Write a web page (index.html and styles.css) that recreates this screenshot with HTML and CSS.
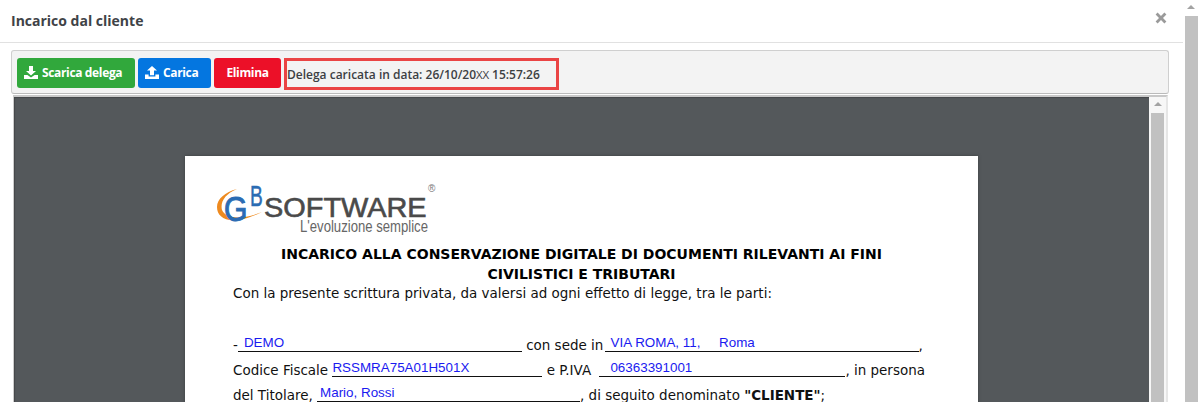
FILE: index.html
```html
<!DOCTYPE html>
<html lang="it">
<head>
<meta charset="utf-8">
<title>Incarico dal cliente</title>
<link rel="stylesheet" href="styles.css">
</head>
<body>
<div class="app">
  <div class="modal">
    <header class="modal-head">
      <h1 class="modal-title">Incarico dal cliente</h1>
      <svg class="close" viewBox="0 0 12 12" width="12" height="12"><path d="M2.6 0.6 6 4 9.4 0.6 11.4 2.6 8 6 11.4 9.4 9.4 11.4 6 8 2.6 11.4 0.6 9.4 4 6 0.6 2.6Z"/></svg>
    </header>
    <div class="modal-body">
      <div class="toolbar">
        <button class="btn btn-green"><svg class="ico" viewBox="0 0 14 13"><path d="M5 0h4v5h3L7 9.6 2 5h3zM0 9h3.4L7 11.6 10.6 9H14v4H0z"/></svg>Scarica delega</button>
        <button class="btn btn-blue"><svg class="ico" viewBox="0 0 14 13"><path d="M7 0l5 4.6H9v4.6H5V4.6H2zM0 8.4h3.6v2.2h6.8V8.4H14V13H0z"/></svg>Carica</button>
        <button class="btn btn-red">Elimina</button>
        <div class="status">Delega caricata in data: 26/10/20<span class="xx">XX</span> 15:57:26</div>
      </div>
      <div class="viewer">
        <div class="pdf-area">
          <div class="page">
            <div class="logo">
              <svg class="logo-swoosh" viewBox="0 0 48 40" width="48" height="40">
                <path d="M20 3C8 6 0 13 0 21 0 33 14 41 45 26 25 34 9 33 5 24 3 16 8 8 20 3Z" fill="#ee8a1f"/>
              </svg>
              <span class="logo-g">G</span><span class="logo-b">B</span>
              <span class="logo-name">SOFTWARE</span>
              <span class="logo-reg">®</span>
              <span class="logo-tag">L'evoluzione semplice</span>
            </div>
            <h2 class="doc-title">INCARICO ALLA CONSERVAZIONE DIGITALE DI DOCUMENTI RILEVANTI AI FINI<br>CIVILISTICI E TRIBUTARI</h2>
            <p class="doc-intro">Con la presente scrittura privata, da valersi ad ogni effetto di legge, tra le parti:</p>
            <p class="doc-line">-<span class="fill w-demo"><span class="val">DEMO</span></span> con sede in <span class="fill w-via"><span class="val">VIA ROMA, 11, &nbsp;&nbsp;&nbsp; Roma</span></span>,</p>
            <p class="doc-line">Codice Fiscale <span class="fill w-cf"><span class="val">RSSMRA75A01H501X</span></span> e P.IVA <span class="fill w-iva"><span class="val">06363391001</span></span>, in persona</p>
            <p class="doc-line">del Titolare, <span class="fill w-tit"><span class="val">Mario, Rossi</span></span>, di seguito denominato <b class="strong">"CLIENTE"</b>;</p>
          </div>
        </div>
        <div class="scroll scroll-inner"><span class="arrow"></span><span class="thumb"></span></div>
      </div>
    </div>
  </div>
  <div class="scroll scroll-outer"><span class="arrow"></span><span class="thumb"></span></div>
</div>
</body>
</html>
```
FILE: styles.css
```css
* { box-sizing: border-box; }
html, body { margin: 0; height: 402px; overflow: hidden; background: #fff; }
.app { display: flex; width: 1198px; height: 402px; }
.modal { width: 1183px; flex: none; display: flex; flex-direction: column; overflow: hidden; }
.modal-head {
  height: 43px; flex: none; border-bottom: 1px solid #e1e1e1;
  display: flex; align-items: center; justify-content: space-between;
  padding: 0 16px 0 11px;
}
.modal-title { margin: 0; font: 700 14px/20px "Open Sans", sans-serif; color: #3f4347; }
.close { fill: #9a9a9a; margin-top: -6px; }
.modal-body { padding: 7px 14px 0 11px; flex: 1; min-height: 0; display: flex; flex-direction: column; }
.toolbar {
  height: 44px; flex: none; display: flex; align-items: flex-start; gap: 3px;
  background: #f3f3f3; border: 1px solid #cfcfcf; border-radius: 3px;
  padding: 7px 0 0 5px; border-bottom-color: #bbb;
}
.btn {
  height: 30px; border: 0; border-radius: 3px; color: #fff; padding: 0 0 0 7px;
  font: 700 12px/30px "Open Sans", sans-serif; letter-spacing: -.35px;
  display: flex; align-items: center; gap: 4px;
}
.ico { width: 14px; height: 13px; fill: #fff; margin-top: -2px; }
.btn-green { width: 118px; background: #31a83c; }
.btn-blue { width: 73px; background: #0476e0; }
.btn-red { width: 67px; background: #ec1028; padding: 0; justify-content: center; }
.status {
  width: 275px; height: 32px; border: 3px solid #ea4444;
  font: 600 12px/28px "Open Sans", sans-serif; color: #3c4043;
  white-space: nowrap;
}
.xx { font-size: 11.5px; font-weight: 400; letter-spacing: -.2px; }
.viewer {
  flex: 1; min-height: 0; margin: 1px 1px 0 2px; display: flex;
  border-top: 2px solid #c8c8c8; border-left: 1px solid #ccc; border-right: 2px solid #e6e6e6;
}
.pdf-area {
  flex: 1; min-width: 0; background: #54585b; padding: 59px 0 0 171px; overflow: hidden;
  box-shadow: inset 1px 1px 1px #45484a;
}
.page {
  width: 793px; height: 400px; background: #fff; padding: 25px 48px 0;
  box-shadow: 0 0 3px #3c3f41; color: #111; font-family: "DejaVu Sans", Verdana, sans-serif;
}
.logo { position: relative; height: 63px; margin-left: -16px; }
.logo-swoosh { position: absolute; left: 0; top: 5px; }
.logo-g { position: absolute; left: 7px; top: 10px; font: 400 35px/35px "Liberation Sans", sans-serif; color: #2b6cb3; -webkit-text-stroke: 1px #2b6cb3; transform: scaleX(.86); transform-origin: left; }
.logo-b { position: absolute; left: 33px; top: 1px; font: 400 29px/29px "Liberation Sans", sans-serif; color: #2b6cb3; -webkit-text-stroke: .5px #2b6cb3; transform: scaleX(.66); transform-origin: left; }
.logo-name { position: absolute; left: 47px; top: 9px; font: 400 27px/36px "Liberation Sans", sans-serif; color: #4a4a4a; -webkit-text-stroke: .6px #4a4a4a; transform: scaleX(1.07); transform-origin: left; white-space: nowrap; }
.logo-reg { position: absolute; left: 211px; top: 2px; font: 400 10px/12px "Liberation Sans", sans-serif; color: #777; }
.logo-tag { position: absolute; left: 83px; top: 36px; font: 400 16px/20px "Liberation Sans", sans-serif; color: #666; transform: scaleX(.82); transform-origin: left; white-space: nowrap; }
.doc-title { margin: 0; font: 700 14px/20px "DejaVu Sans", Verdana, sans-serif; text-align: center; color: #000; }
.doc-intro { margin: 0 0 31px; font-size: 13.47px; line-height: 18px; white-space: nowrap; }
.doc-line { margin: 0; font-size: 13.47px; line-height: 25px; height: 25px; white-space: nowrap; }
.fill { display: inline-block; position: relative; height: 15px; border-bottom: 1px solid #111; vertical-align: -2px; }
.val { position: absolute; bottom: 1px; font: 13.4px/15px "Liberation Sans", sans-serif; color: #1a1af0; white-space: nowrap; }
.w-demo { width: 284px; }
.w-demo .val { left: 6px; }
.w-via { width: 314px; margin-left: -3px; }
.w-via .val { left: 6px; }
.w-cf { width: 210px; }
.w-cf .val { left: 0; }
.w-iva { width: 246px; margin-left: 4px; }
.w-iva .val { left: 11px; }
.w-tit { width: 263px; }
.w-tit .val { left: 3px; }
.strong { font-weight: 700; }
.scroll { display: flex; flex-direction: column; align-items: center; flex: none; }
.scroll-outer { width: 15px; height: 402px; background: #fff; padding-left: 1px; }
.scroll-inner { width: 17px; background: #f7f7f7; }
.arrow { height: 16px; flex: none; width: 13px; position: relative; }
.arrow::after {
  content: ""; position: absolute; left: 2.5px; top: 5px;
  border: 4px solid transparent; border-top: 0; border-bottom: 4px solid #a3a3a3;
}
.thumb { flex: 1; width: 13px; background: #c1c1c1; }
```
